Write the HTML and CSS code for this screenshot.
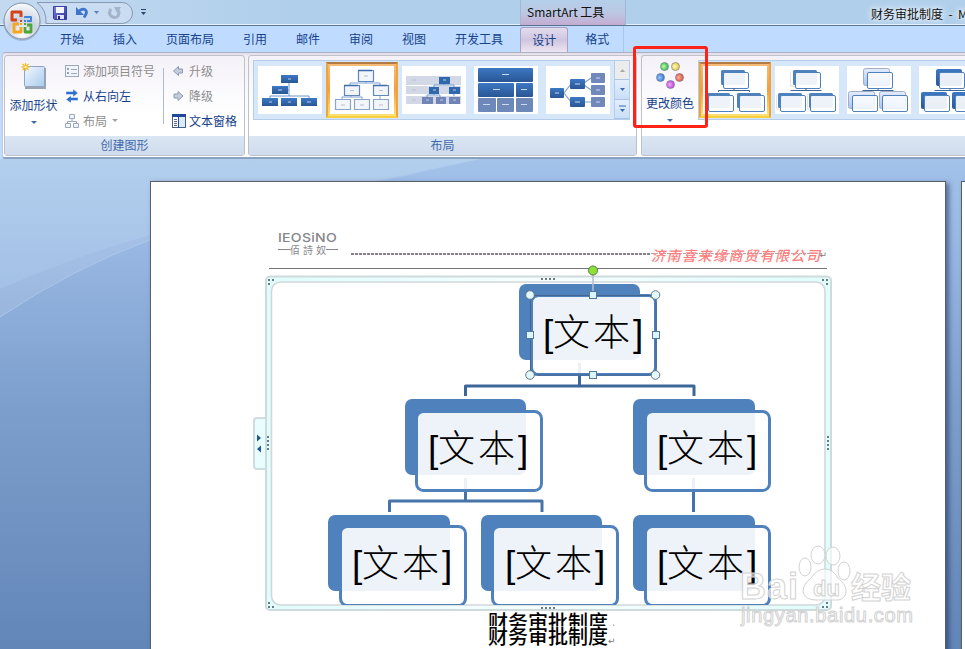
FILE: index.html
```html
<!DOCTYPE html>
<html lang="zh-CN">
<head>
  <meta charset="UTF-8" />
  <meta name="viewport" content="width=device-width, initial-scale=1.0" />
  <title>财务审批制度</title>
  <link rel="stylesheet" href="styles.css">
</head>
<body>
  <header class="titlebar">
    <svg class="quick-access" width="150" height="24" viewBox="0 0 150 24">
      <defs>
        <linearGradient id="floppy" x2="1" y2="1"><stop offset="0" stop-color="#7d86e0"/><stop offset="1" stop-color="#2b2f93"/></linearGradient>
      </defs>
      <path d="M37 2.500H122a10.500 10.500 0 0 1 0 21H46Q47 10 37 2.500z" fill="#c9dcf1" stroke="#8898b0"/>
      <path d="M53.500 6.500h13v13h-12l-1-1z" fill="url(#floppy)" stroke="#3c3f9c"/>
      <path d="M56 7h8v6h-8z" fill="#f4f7ff"/>
      <path d="M57 15h7v4h-7z" fill="#dfe3f4"/><path d="M58 16h2v3h-2z" fill="#26297a"/>
      <path d="M79 11q4-3 6.500-1t-1.500 7.500" fill="none" stroke="#3f74cc" stroke-width="2.800"/>
      <path d="M76 7v8h8z" fill="#3f74cc"/>
      <path d="M94 11h5l-2.500 3z" fill="#5b82b8"/>
      <path d="M111 9q-3 4 0 7 4 3 7 0 2-4 0-6" fill="none" stroke="#a4b3c9" stroke-width="3"/>
      <path d="M114 7h7l-4 6z" fill="#a4b3c9"/>
      <path d="M141 9.500h5" stroke="#27446f"/><path d="M141 12h5l-2.500 3z" fill="#27446f"/>
    </svg>
    <div class="context-title">SmartArt 工具</div>
    <div class="doc-title">财务审批制度&nbsp; -&nbsp; M</div>
  </header>

  <nav class="tabs">
    <span class="tab">开始</span>
    <span class="tab">插入</span>
    <span class="tab">页面布局</span>
    <span class="tab">引用</span>
    <span class="tab">邮件</span>
    <span class="tab">审阅</span>
    <span class="tab">视图</span>
    <span class="tab">开发工具</span>
    <div class="context-tabs">
      <span class="tab active">设计</span>
      <span class="tab">格式</span>
    </div>
  </nav>

  <svg class="office-button" width="42" height="44" viewBox="0 0 42 44">
    <defs>
      <radialGradient id="orb" cx=".5" cy=".85" r=".8"><stop offset="0" stop-color="#ffffff"/><stop offset=".5" stop-color="#c8d2e0"/><stop offset="1" stop-color="#f4f7fb"/></radialGradient>
    </defs>
    <circle cx="20" cy="21.500" r="18.500" fill="#8ea0b8" opacity=".6"/>
    <circle cx="20" cy="20" r="18" fill="url(#orb)" stroke="#8290a6"/>
    <g fill="none" stroke-linejoin="round">
      <path d="M15 19h-5v-8h9v5" stroke="#d4441c" stroke-width="3"/>
      <path d="M23 17v-1h6v4h-4" stroke="#3f86d8" stroke-width="2"/>
      <path d="M17 23h-5v8h7v-5" stroke="#f5a623" stroke-width="3"/>
      <path d="M23 26v5h6v-7h-4" stroke="#4fa53a" stroke-width="2.800"/>
    </g>
    <path d="M18 19h2v2h-2z" fill="#d4441c"/><path d="M22 19h2v2h-2z" fill="#3f86d8"/>
    <path d="M18 22h2v2h-2z" fill="#f5a623"/><path d="M22 22h2v2h-2z" fill="#4fa53a"/>
  </svg>

  <section class="ribbon">
    <div class="group group-create">
      <div class="group-body">
        <div class="big-button add-shape">
          <svg width="28" height="28" viewBox="0 0 28 28">
            <defs><linearGradient id="shape" x2="1" y2="1"><stop offset="0" stop-color="#f2f8ff"/><stop offset="1" stop-color="#a9cbed"/></linearGradient></defs>
            <path d="M5 26h20V6" stroke="#9aa3b0" stroke-width="2" fill="none"/>
            <rect x="4.500" y="4.500" width="20" height="20" rx="1" fill="url(#shape)" stroke="#8fa5c2"/>
            <path d="M5.500 1v8M1.500 5h8M2.500 2l6 6M8.500 2l-6 6" stroke="#f3c02c" stroke-width="1.300"/>
            <path d="M4.500 4h2v2h-2z" fill="#fff8c8"/>
          </svg>
          <span>添加形状</span>
          <i class="arrow"></i>
        </div>
        <div class="command-list">
          <div class="command disabled">
            <svg width="14" height="14" viewBox="0 0 14 14"><rect x=".5" y="1.500" width="13" height="11" fill="#f1f4fa" stroke="#9aa8be"/><path d="M2 4h2v2H2zM2 8h2v2H2z" fill="#8fa0ba"/><path d="M6 5.500h6M6 9.500h6" stroke="#9aa8be"/></svg>
            <span>添加项目符号</span>
          </div>
          <div class="command">
            <svg width="14" height="14" viewBox="0 0 14 14"><path d="M1 2.500h7V0l5 4-5 4V5.500H1zM13 8.500H6V6.500L1 10.500l5 3.500v-2.500h7z" fill="#2f6fd0" stroke="#fff" stroke-width=".4"/></svg>
            <span>从右向左</span>
          </div>
          <div class="command disabled">
            <svg width="14" height="14" viewBox="0 0 14 14"><path d="M7 5v3M2.500 10V7.500h9V10" fill="none" stroke="#9aa8be"/><path d="M4.500.5h5v4h-5zM.5 9.500h5v4h-5zM8.500 9.500h5v4h-5z" fill="#f1f4fa" stroke="#9aa8be"/></svg>
            <span>布局</span><i class="arrow gray"></i>
          </div>
        </div>
        <div class="separator"></div>
        <div class="command-list narrow">
          <div class="command disabled">
            <svg width="14" height="14" viewBox="0 0 14 14"><path d="M1.500 7l5-4.500V5h4v4h-4v2.500z" fill="#c3cedd" stroke="#8b9bb5"/></svg>
            <span>升级</span>
          </div>
          <div class="command disabled">
            <svg width="14" height="14" viewBox="0 0 14 14"><path d="M11 7L6 2.500V5H2v4h4v2.500z" fill="#c3cedd" stroke="#8b9bb5"/></svg>
            <span>降级</span>
          </div>
          <div class="command">
            <svg width="14" height="14" viewBox="0 0 14 14"><rect x=".5" y=".5" width="13" height="13" fill="#dbe9f8" stroke="#44618e"/><path d="M0 0h14v3H0z" fill="#20489a"/><path d="M1 3h5v10H1z" fill="#fff"/><path d="M2 5.500h3M2 7.500h3M2 9.500h3M2 11.500h3" stroke="#56677f"/><path d="M6.500 3v11" stroke="#20489a"/></svg>
            <span>文本窗格</span>
          </div>
        </div>
      </div>
      <div class="group-label">创建图形</div>
    </div>

    <div class="group group-layout">
      <div class="group-body">
        <div class="gallery">
          <div class="thumb">
            <svg width="64" height="48" viewBox="0 0 64 48">
              <defs><linearGradient id="box" x2="0" y2="1"><stop offset="0" stop-color="#3c78c4"/><stop offset="1" stop-color="#2a5694"/></linearGradient></defs>
              <path d="M31 16v14M12 32v-2h39v2M31 24h-4" fill="none" stroke="#6d97cc"/>
              <path d="M23 9h17v8H23z" fill="url(#box)"/><path d="M14 20h16v8H14z" fill="url(#box)"/>
              <path d="M4 32h16v8H4zM23 32h16v8H23zM43 32h16v8H43z" fill="url(#box)"/>
              <path d="M30 13h3M20 24h4M11 36h3M30 36h3M49 36h4" stroke="#b7cdea"/>
            </svg>
          </div>
          <div class="thumb selected">
            <svg width="64" height="48" viewBox="0 0 64 48">
              <path d="M36 15v2M20 20v-3h30v3M50 30v3M21 29v2M12 33v-2h20v2" fill="none" stroke="#7ba0cf"/>
              <g fill="#f2f5fa" stroke-width="1.200">
                <path d="M28.500 4.500h15v11h-15zM14.500 19.500h15v10h-15zM43.500 19.500h15v10h-15z" stroke="#5f88bd"/>
                <path d="M5.500 33.500h15v10h-15zM24.500 33.500h15v10h-15zM43.500 33.500h15v10h-15z" stroke="#8ba5ca"/>
              </g>
              <path d="M28 4.500h14M14 19.500h14M43 19.500h14" stroke="#3f6da8" stroke-width="1.500"/>
              <path d="M34 10h4M20 24.500h4M49 24.500h4M11 39h4M30 39h4M49 39h4" stroke="#b6c0cf"/>
            </svg>
          </div>
          <div class="thumb">
            <svg width="64" height="48" viewBox="0 0 64 48">
              <path d="M4 10h55v9H4zM4 20h55v8H4zM4 30h55v8H4z" fill="#d2d8e6"/>
              <path d="M42 17v2M32 21v-2h20v2M32 27v2M25 31v-2h13v2M52 27v3" fill="none" stroke="#6d97cc"/>
              <path d="M37 11h11v7H37zM27 21h10v7H27zM47 21h11v7H47z" fill="#3167ac"/>
              <path d="M20 31h11v7H20zM34 31h10v7H34zM47 31h11v7H47z" fill="#7085b5"/>
              <path d="M10 14h4M10 24h4M10 34h4" stroke="#b9c1d2"/>
              <path d="M41 14h3M31 24h3M51 24h3M24 34h3M38 34h3M51 34h3" stroke="#b7cdea"/>
            </svg>
          </div>
          <div class="thumb">
            <svg width="64" height="48" viewBox="0 0 64 48">
              <g fill="url(#box)"><rect x="4" y="2" width="55" height="14" rx="1"/><rect x="4" y="17" width="36" height="14" rx="1"/><rect x="42" y="17" width="17" height="14" rx="1"/></g>
              <g fill="#6f88ba"><rect x="4" y="32" width="18" height="14" rx="1"/><rect x="23" y="32" width="17" height="14" rx="1"/><rect x="42" y="32" width="17" height="14" rx="1"/></g>
              <path d="M28 8.500h7M19 23.500h7M47 23.500h6M9 38.500h7M28 38.500h7M47 38.500h6" stroke="#c8d8ee"/>
            </svg>
          </div>
          <div class="thumb">
            <svg width="64" height="48" viewBox="0 0 64 48">
              <path d="M18 27l7-9M18 27l7 9M38 17l7-5M38 19l7 5M38 36h7" stroke="#7ba0d0" stroke-width="1.200"/>
              <g fill="url(#box)"><rect x="4" y="22" width="14" height="10" rx="1"/><rect x="24" y="13" width="15" height="10" rx="1"/><rect x="24" y="31" width="15" height="10" rx="1"/></g>
              <g fill="#7088ba"><rect x="45" y="7" width="14" height="10" rx="1"/><rect x="45" y="19" width="14" height="10" rx="1"/><rect x="45" y="31" width="14" height="10" rx="1"/></g>
              <path d="M9 27h4M29 18h5M29 36h5M50 12h4M50 24h4M50 36h4" stroke="#c8d8ee"/>
            </svg>
          </div>
          <div class="scroller">
            <div class="scroll-button off"><svg width="7" height="5" viewBox="0 0 7 5"><path d="M1 4h5L3.500 1z" fill="#a9a9a9"/></svg></div>
            <div class="scroll-button"><svg width="7" height="5" viewBox="0 0 7 5"><path d="M1 1h5L3.500 4z" fill="#3c6cae"/></svg></div>
            <div class="scroll-button"><svg width="7" height="8" viewBox="0 0 7 8"><path d="M0 1h7" stroke="#3c6cae"/><path d="M1 4h5L3.500 7z" fill="#3c6cae"/></svg></div>
          </div>
        </div>
      </div>
      <div class="group-label">布局</div>
    </div>

    <div class="group group-styles">
      <div class="group-body">
        <div class="big-button change-colors">
          <svg width="28" height="28" viewBox="0 0 28 28">
            <defs>
              <radialGradient id="green" cx=".4"><stop offset="0" stop-color="#b8ffa0"/><stop offset="1" stop-color="#45c05e"/></radialGradient>
              <radialGradient id="yellow" cx=".4"><stop offset="0" stop-color="#fffbb8"/><stop offset="1" stop-color="#e3cc4a"/></radialGradient>
              <radialGradient id="blue" cx=".4"><stop offset="0" stop-color="#9ccaff"/><stop offset="1" stop-color="#3b7cd8"/></radialGradient>
              <radialGradient id="red" cx=".4"><stop offset="0" stop-color="#ffb0a0"/><stop offset="1" stop-color="#df5a48"/></radialGradient>
              <radialGradient id="violet" cx=".4"><stop offset="0" stop-color="#f2a8ff"/><stop offset="1" stop-color="#c24fdf"/></radialGradient>
            </defs>
            <g stroke="#7d8494" stroke-width=".7">
              <circle cx="8.500" cy="4.500" r="4" fill="url(#green)"/><circle cx="19.500" cy="4.500" r="4" fill="url(#yellow)"/>
              <circle cx="4.500" cy="15.500" r="4" fill="url(#blue)"/><circle cx="23.500" cy="15.500" r="4" fill="url(#red)"/>
              <circle cx="14.500" cy="22.500" r="4" fill="url(#violet)"/>
            </g>
          </svg>
          <span>更改颜色</span>
          <i class="arrow"></i>
        </div>
        <div class="gallery gallery-styles">
          <div class="thumb selected">
            <svg width="64" height="48" viewBox="0 0 64 48">
              <g fill="#4f81bd"><rect x="18" y="4" width="24" height="15" rx="1.500"/><rect x="3" y="27" width="24" height="15" rx="1.500"/><rect x="34" y="27" width="24" height="15" rx="1.500"/></g>
              <g fill="#fff" fill-opacity=".9" stroke="#4f81bd"><rect x="20.500" y="6.500" width="25" height="16" rx="1.500"/><rect x="5.500" y="29.500" width="25" height="16" rx="1.500"/><rect x="36.500" y="29.500" width="25" height="16" rx="1.500"/></g>
              <path d="M31 22v2M15.500 26v-1.500h31V26" fill="none" stroke="#3a6498"/>
            </svg>
          </div>
          <div class="thumb">
            <svg width="64" height="48" viewBox="0 0 64 48">
              <g fill="#e4e4e4"><rect x="15" y="5" width="24" height="16" rx="2"/><rect x="1" y="28" width="24" height="16" rx="2"/><rect x="32" y="28" width="24" height="16" rx="2"/></g>
              <g fill="#fff"><rect x="16" y="4" width="24" height="16" rx="2"/><rect x="2" y="27" width="24" height="16" rx="2"/><rect x="33" y="27" width="24" height="16" rx="2"/></g>
              <g fill="#4f81bd"><rect x="18" y="4" width="24" height="15" rx="1.500"/><rect x="3" y="27" width="24" height="15" rx="1.500"/><rect x="34" y="27" width="24" height="15" rx="1.500"/></g>
              <g fill="#fff" fill-opacity=".9" stroke="#4f81bd"><rect x="20.500" y="6.500" width="25" height="16" rx="1.500"/><rect x="5.500" y="29.500" width="25" height="16" rx="1.500"/><rect x="35.500" y="29.500" width="25" height="16" rx="1.500"/></g>
              <path d="M31 22v2M15.500 24.500h31" fill="none" stroke="#3a6498"/>
            </svg>
          </div>
          <div class="thumb">
            <svg width="64" height="48" viewBox="0 0 64 48">
              <defs><linearGradient id="soft" x2="0" y2="1"><stop offset="0" stop-color="#e4ecff"/><stop offset="1" stop-color="#a9c4f3"/></linearGradient></defs>
              <path d="M31 22v2M15.500 24.500h31" fill="none" stroke="#3a6498"/>
              <g fill="url(#soft)" stroke="#a3aec4"><rect x="16.500" y="2.500" width="26" height="17" rx="2"/><rect x="1.500" y="25.500" width="26" height="17" rx="2"/><rect x="32.500" y="25.500" width="26" height="17" rx="2"/></g>
              <g fill="#fff" fill-opacity=".8" stroke="#4f81bd"><rect x="20.500" y="6.500" width="25" height="16" rx="1.500"/><rect x="5.500" y="29.500" width="25" height="16" rx="1.500"/><rect x="35.500" y="29.500" width="25" height="16" rx="1.500"/></g>
            </svg>
          </div>
          <div class="thumb">
            <svg width="64" height="48" viewBox="0 0 64 48">
              <path d="M31 22v2M15.500 24.500h31" fill="none" stroke="#3a6498"/>
              <g fill="url(#box)"><rect x="17" y="3" width="26" height="17" rx="2"/><rect x="2" y="26" width="26" height="17" rx="2"/><rect x="33" y="26" width="26" height="17" rx="2"/></g>
              <g fill="#fff" fill-opacity=".9" stroke="#4f81bd"><rect x="20.500" y="6.500" width="25" height="16" rx="1.500"/><rect x="5.500" y="29.500" width="25" height="16" rx="1.500"/><rect x="36.500" y="29.500" width="25" height="16" rx="1.500"/></g>
            </svg>
          </div>
        </div>
      </div>
      <div class="group-label"></div>
    </div>
  </section>

  <div class="highlight"></div>

  <main class="workspace">
    <svg class="swoosh" width="965" height="490" viewBox="0 0 965 490">
      <defs>
        <linearGradient id="sky" x2="0" y2="1"><stop offset="0" stop-color="#b3cfee"/><stop offset="1" stop-color="#a3c0e6"/></linearGradient>
      </defs>
      <path d="M0 0H480Q290 42 150 81 75 108 0 158z" fill="#fff" opacity=".12"/>
      <path d="M0 0H480Q290 38 150 76 75 97 0 130z" fill="url(#sky)"/>
      <path d="M0 158Q75 108 150 81" fill="none" stroke="#b4cdee" opacity=".7"/>
    </svg>

    <article class="page">
      <div class="page-header">
        <div class="logo">
          <span class="logo-en">IEOSiNO</span>
          <span class="logo-cn">佰 詩 奴</span>
        </div>
        <div class="dashes"></div>
        <div class="company">济南喜来缘商贸有限公司</div>
        <span class="mark">↵</span>
      </div>

      <svg class="smartart" width="580" height="348" viewBox="252 264 580 348">
        <defs>
          <linearGradient id="frame" x2="1" y2="0"><stop offset="0" stop-color="#e0fcfc"/><stop offset=".5" stop-color="#f6ffff"/><stop offset="1" stop-color="#e0fcfc"/></linearGradient>
          <clipPath id="canvas"><rect x="271" y="264" width="555" height="341"/></clipPath>
        </defs>
        <!-- frame -->
        <rect x="254" y="418" width="16" height="51" rx="3" fill="#e8fdfd" stroke="#d0dcdf" stroke-width="2"/>
        <path d="M257 434.500v7l4-3.500zM261 445.500v7l-4-3.500z" fill="#1f5597"/>
        <rect x="266" y="276.500" width="565" height="333.500" rx="4" fill="url(#frame)" stroke="#cfdadc" stroke-width="2"/>
        <rect x="271.500" y="282" width="553.500" height="323" rx="9" fill="#fff" stroke="#d2d8da" stroke-width="1.600"/>
        <g fill="#6b7b84">
          <path d="M268 279h2v2h-2zM272 279h2v2h-2zM268 283h2v2h-2zM822 279h2v2h-2zM826 279h2v2h-2zM826 283h2v2h-2z"/>
          <path d="M268 602h2v2h-2zM268 606h2v2h-2zM272 606h2v2h-2zM826 602h2v2h-2zM826 606h2v2h-2zM822 606h2v2h-2z"/>
          <path d="M541 278h2v2h-2zM545 278h2v2h-2zM549 278h2v2h-2zM553 278h2v2h-2zM541 607h2v2h-2zM545 607h2v2h-2zM549 607h2v2h-2zM553 607h2v2h-2z"/>
          <path d="M267 436h2v2h-2zM267 440h2v2h-2zM267 444h2v2h-2zM267 448h2v2h-2zM827 436h2v2h-2zM827 440h2v2h-2zM827 444h2v2h-2zM827 448h2v2h-2z"/>
        </g>
        <!-- connectors -->
        <g fill="none" stroke-width="3" stroke-linejoin="round">
          <path d="M579.500 363v23M465.500 396v-10h228.500v10" stroke="#3d6799"/>
          <path d="M465.500 478v23M389.500 512v-11h152.500v11M693.500 478v34" stroke="#4674aa"/>
        </g>
        <!-- nodes -->
        <g clip-path="url(#canvas)">
          <g class="node"><rect class="back" x="519" y="284" width="121" height="76" rx="7"/><rect class="front" x="531.500" y="295.500" width="124" height="79" rx="7"/><text x="543 553 593 633" y="346">[文本]</text></g>
          <g class="node"><rect class="back" x="405" y="399" width="121" height="76" rx="7"/><rect class="front" x="416.500" y="411.500" width="125" height="79" rx="7"/><text x="428 438 478 518" y="462">[文本]</text></g>
          <g class="node"><rect class="back" x="633" y="399" width="122" height="76" rx="7"/><rect class="front" x="645.500" y="411.500" width="124" height="79" rx="7"/><text x="657 667 707 747" y="462">[文本]</text></g>
          <g class="node"><rect class="back" x="328" y="515" width="122" height="76" rx="7"/><rect class="front" x="340.500" y="526.500" width="125" height="79" rx="7"/><text x="352 362 402 442" y="577">[文本]</text></g>
          <g class="node"><rect class="back" x="481" y="515" width="121" height="76" rx="7"/><rect class="front" x="492.500" y="526.500" width="125" height="79" rx="7"/><text x="505 515 555 595" y="577">[文本]</text></g>
          <g class="node"><rect class="back" x="633" y="515" width="122" height="76" rx="7"/><rect class="front" x="645.500" y="526.500" width="124" height="79" rx="7"/><text x="657 667 707 747" y="577">[文本]</text></g>
        </g>
        <!-- selection handles -->
        <rect x="530.500" y="295.500" width="125.500" height="79.500" fill="none" stroke="#44658f"/>
        <path d="M593 275v17" stroke="#b3bfcb" stroke-width="1.500"/>
        <circle cx="593" cy="270.500" r="4.500" fill="#8be234" stroke="#5d7a45"/>
        <g fill="#e2f8fb" stroke="#667884">
          <circle cx="530" cy="295" r="4.300"/><circle cx="655.500" cy="295" r="4.300"/><circle cx="530" cy="375" r="4.300"/><circle cx="655.500" cy="375" r="4.300"/>
        </g>
        <g fill="#dcf5fa" stroke="#54789c">
          <rect x="589.500" y="291.500" width="7" height="7"/><rect x="589.500" y="371.500" width="7" height="7"/><rect x="526.500" y="331.500" width="7" height="7"/><rect x="652.500" y="331.500" width="7" height="7"/>
        </g>
      </svg>

      <div class="heading clipped">财务审批制度<span class="mark">↵</span></div>
      <div class="heading">财务审批制度<span class="mark">↵</span></div>

      <svg class="watermark" width="190" height="92" viewBox="735 540 190 92">
        <g class="paw">
          <ellipse cx="805" cy="567" rx="6" ry="9"/><ellipse cx="818" cy="555" rx="7" ry="9"/><ellipse cx="833" cy="556" rx="7" ry="9"/><ellipse cx="844" cy="571" rx="6" ry="9"/>
          <path d="M825 569q8 0 13 9 9 7 8 15-2 8-12 7h-18q-11 0-13-8 0-8 8-14 6-9 14-9z"/>
        </g>
        <text class="wm-big" x="740" y="599" textLength="58">Bai</text>
        <text class="wm-du" x="813" y="596">du</text>
        <text class="wm-cn" x="851" y="598">经验</text>
        <text class="wm-url" x="741" y="622" textLength="172">jingyan.baidu.com</text>
      </svg>
    </article>
    <div class="page next-page"></div>
  </main>
</body>
</html>
```
FILE: styles.css
```css
* {
  box-sizing: border-box;
}
body {
  margin: 0;
  width: 965px;
  height: 649px;
  overflow: hidden;
  position: relative;
  display: flex;
  flex-direction: column;
  font-family: "Noto Sans CJK SC", sans-serif;
  font-size: 12px;
  color: #15428b;
  background: #bfdbff;
}
svg {
  display: block;
  flex-shrink: 0;
}

/* title bar */
.titlebar {
  display: flex;
  height: 26px;
  flex-shrink: 0;
  overflow: hidden;
  background: linear-gradient(90deg, #c3d9f0, #b0cfeb 30%, #b0cfeb);
  border-bottom: 1px solid #587592;
  box-shadow: inset 0 -1px 0 #e4f0fc;
}
.context-title {
  width: 106px;
  flex-shrink: 0;
  margin-left: 370px;
  padding-left: 6px;
  line-height: 23px;
  color: #111;
  white-space: nowrap;
  border: solid #a3b7d6;
  border-width: 0 1px;
  background: linear-gradient(#b4cfea, #bcc8e3 50%, #c3acd1);
}
.doc-title {
  flex: 1;
  margin-left: 245px;
  line-height: 27px;
  color: #111;
  white-space: nowrap;
  text-shadow: 0 0 5px #fff, 0 0 8px #fff;
}
.office-button {
  position: absolute;
  left: 2px;
  top: 1px;
}

/* tabs */
.tabs {
  display: flex;
  height: 26px;
  flex-shrink: 0;
  padding-left: 45px;
  background: #bfdbff;
}
.tab {
  padding: 0 14px 0 15px;
  line-height: 26px;
  white-space: nowrap;
}
.context-tabs {
  display: flex;
  width: 106px;
  margin-left: 1px;
  border-right: 1px solid #acc5e6;
}
.context-tabs .tab {
  padding: 0 14px;
}
.context-tabs .tab.active {
  width: 48px;
  margin: 1px 3px 0 2px;
  padding: 0 11px;
  line-height: 24px;
  border: 1px solid #a99fc0;
  border-bottom: 0;
  border-radius: 3px 3px 0 0;
  background: linear-gradient(#e3dcee, #cfc5e0 50%, #eee5f1);
}

/* ribbon */
.ribbon {
  display: flex;
  gap: 3px;
  height: 107px;
  flex-shrink: 0;
  margin-left: 2px;
  padding: 2px 0 0 1px;
  border-top: 1px solid #aab2c2;
  border-bottom: 2px solid #8aa2c2;
  border-left: 1px solid #c3cad6;
  border-radius: 3px 0 0 3px;
  background: linear-gradient(#e2dce9, #f4f2f7 4px, #fff 80px);
}
.group {
  height: 101px;
  flex-shrink: 0;
  display: flex;
  flex-direction: column;
  border: 1px solid #bfc0c8;
  border-radius: 3px;
  background: linear-gradient(#f4f1f8, #fff 60%);
}
.group-create {
  width: 241px;
}
.group-layout {
  width: 389px;
}
.group-styles {
  flex: 1;
  min-width: 0;
  margin-left: 1px;
  overflow: hidden;
  border-right: 0;
  border-radius: 3px 0 0 3px;
}
.group-body {
  display: flex;
  height: 80px;
}
.group-label {
  flex: 1;
  line-height: 18px;
  text-align: center;
  color: #3e6aaa;
  background: linear-gradient(#dbe6f4, #d0dced);
}
.big-button {
  display: flex;
  flex-direction: column;
  flex-shrink: 0;
  align-items: center;
  white-space: nowrap;
}
.big-button span {
  line-height: 18px;
}
.add-shape {
  width: 57px;
  padding-top: 6px;
}
.add-shape span {
  margin-top: 6px;
}
.change-colors {
  width: 56px;
  padding-top: 6px;
}
.change-colors span {
  margin-top: 4px;
}
.arrow {
  margin-top: 7px;
  border: 3px solid transparent;
  border-top-color: #3c6cae;
  border-bottom: 0;
}
.arrow.gray {
  margin-top: 0;
  margin-left: 1px;
  border-top-color: #a3a3a3;
}
.command-list {
  width: 101px;
  flex-shrink: 0;
  padding-top: 2px;
  padding-left: 3px;
}
.add-shape + .command-list {
  margin-right: 0;
}
.narrow {
  width: 76px;
  padding-left: 8px;
}
.command {
  display: flex;
  align-items: center;
  gap: 4px;
  height: 25px;
  white-space: nowrap;
}
.narrow .command {
  gap: 3px;
}
.disabled {
  color: #8d8d8d;
}
.separator {
  width: 1px;
  height: 56px;
  margin-top: 12px;
  background: #a9bcd4;
}

/* galleries */
.gallery {
  display: flex;
  width: 377px;
  height: 60px;
  flex-shrink: 0;
  margin: 4px 0 0 4px;
  border: 1px solid #b5cdea;
  background: #d6e7f9;
}
.gallery-styles {
  width: 268px;
  margin-left: 0;
  border-right: 0;
  overflow: hidden;
}
.thumb {
  width: 72px;
  height: 56px;
  margin-top: 1px;
  padding: 4px;
  flex-shrink: 0;
}
.thumb svg {
  background: #fff;
}
.thumb.selected {
  padding: 2px;
  border: 2px solid #eea33c;
  border-top-color: #b17a45;
  border-bottom-color: #f8cf3d;
  background: linear-gradient(#f5bc78, #f99f3d 50%, #ffe173);
}
.scroller {
  display: flex;
  flex-direction: column;
  width: 15px;
  border-left: 1px solid #b5cdea;
}
.scroll-button {
  flex: 1;
  display: flex;
  align-items: center;
  justify-content: center;
  border-bottom: 1px solid #a9c4e6;
  background: linear-gradient(#e4effc, #c9def6);
}
.scroll-button.off {
  background: #ececec;
}
.highlight {
  position: absolute;
  left: 633px;
  top: 46px;
  width: 75px;
  height: 82px;
  border: 3px solid #ff2216;
  border-radius: 3px;
}

/* document */
.workspace {
  position: relative;
  flex: 1;
  display: flex;
  gap: 15px;
  padding: 22px 0 0 150px;
  overflow: hidden;
  background: linear-gradient(#a3c2ea, #98b7e2 18%, #7d9fcd 50%, #6286b8);
}
.swoosh {
  position: absolute;
  left: 0;
  top: 0;
}
.page {
  position: relative;
  width: 796px;
  height: 480px;
  flex-shrink: 0;
  border: 1px solid #5a5f66;
  background: #fff;
  box-shadow: 3px 2px 5px rgba(30, 50, 90, 0.6);
}
.next-page {
  width: 4px;
  border-right: 0;
}
.page-header {
  display: flex;
  height: 38px;
  width: 558px;
  margin: 49px 0 0 118px;
  border-bottom: 1px solid #77777b;
}
.logo {
  width: 70px;
  height: 26px;
  flex-shrink: 0;
  padding-left: 9px;
  color: #858589;
  white-space: nowrap;
}
.logo-en {
  display: block;
  font: 500 14px/13px Inter, sans-serif;
  letter-spacing: 0.3px;
  transform: scaleY(0.85);
}
.logo-cn {
  display: flex;
  align-items: center;
  width: 60px;
  font-size: 10px;
  line-height: 11px;
  word-spacing: 1px;
}
.logo-cn::before,
.logo-cn::after {
  content: "";
  flex: 1;
  height: 1px;
  background: #88888c;
}
.dashes {
  width: 300px;
  flex-shrink: 0;
  margin: 22px 0 0 12px;
  height: 2px;
  background: repeating-linear-gradient(90deg, #85808a 0 3px, #fff 3px 4px);
}
.company {
  height: 20px;
  margin-top: 14px;
  font-size: 14px;
  line-height: 20px;
  font-weight: 500;
  font-style: italic;
  letter-spacing: 1.5px;
  color: #ff7c7c;
  white-space: nowrap;
  background: repeating-linear-gradient(90deg, #aaa 0 3px, transparent 3px 4px) 0 8px / 100% 1px no-repeat;
}
.mark {
  font: 9px "DejaVu Sans", sans-serif;
  color: #777;
}
.page-header .mark {
  margin: 19px -6px 0 -2px;
}
.smartart {
  margin: -5px 0 0 101px;
}
.node .back {
  fill: #4f81bd;
}
.node .front {
  fill: #fff;
  fill-opacity: 0.9;
  stroke: #4f81bd;
  stroke-width: 3;
}
.node text {
  font-family: "Liberation Sans", "Noto Sans CJK SC", sans-serif;
  font-size: 37px;
  font-weight: 300;
  fill: #000;
}
.heading {
  height: 24px;
  margin-left: 337px;
  font-size: 20px;
  line-height: 20px;
  font-weight: 500;
  color: #000;
  white-space: nowrap;
}
.heading.clipped {
  height: 14px;
  overflow: hidden;
}

/* watermark */
.watermark {
  position: absolute;
  left: 584px;
  top: 358px;
}
.watermark .paw,
.watermark text {
  fill: #fff;
  fill-opacity: 0.65;
  stroke: #d2d2d2;
  stroke-width: 1;
}
.watermark text {
  font-family: "Liberation Sans", "Noto Sans CJK SC", sans-serif;
}
.watermark .wm-big {
  font-size: 36px;
  font-weight: bold;
}
.watermark .wm-du {
  font-size: 22px;
  font-weight: bold;
}
.watermark .wm-cn {
  font-size: 30px;
  font-weight: bold;
}
.watermark .wm-url {
  font-size: 20px;
}
```
